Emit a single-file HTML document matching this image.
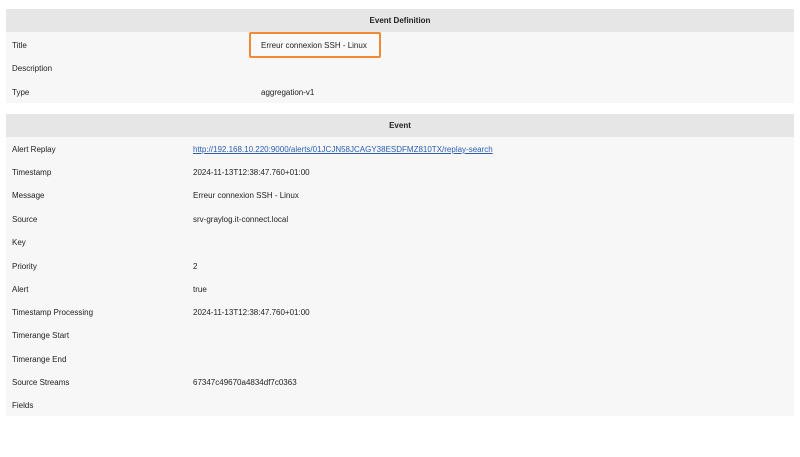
<!DOCTYPE html>
<html><head><style>
body{margin:0;width:800px;height:457px;background:#fff;font-family:"Liberation Sans",sans-serif;font-size:8px;color:#222;position:relative;overflow:hidden}
.box{position:absolute;left:6px;width:788px;background:#f7f7f7}
.hd{position:absolute;left:6px;width:788px;height:23px;background:#e6e6e6;text-align:center;font-weight:bold;line-height:23px;font-size:8px}
.t{position:absolute;white-space:nowrap;line-height:10px}
a{color:#2a5db0;text-decoration:underline}
</style></head><body>
<div class="box" style="top:9px;height:94px"></div>
<div class="hd" style="top:9px">Event Definition</div>
<div class="t" style="left:12px;top:41px">Title</div>
<div class="t" style="left:12px;top:64px">Description</div>
<div class="t" style="left:12px;top:88px">Type</div>
<div style="position:absolute;left:249px;top:32px;width:128px;height:22px;border:2.5px solid #f08a35;background:#f9f9f9;border-radius:2px"></div>
<div class="t" style="left:261px;top:41px">Erreur connexion SSH - Linux</div>
<div class="t" style="left:261px;top:88px">aggregation-v1</div>

<div class="box" style="top:114px;height:302px"></div>
<div class="hd" style="top:114px">Event</div>
<div class="t" style="left:12px;top:145px">Alert Replay</div>
<div class="t" style="left:193px;top:145px"><a>http://192.168.10.220:9000/alerts/01JCJN58JCAGY38ESDFMZ810TX/replay-search</a></div>
<div class="t" style="left:12px;top:168px">Timestamp</div><div class="t" style="left:193px;top:168px">2024-11-13T12:38:47.760+01:00</div>
<div class="t" style="left:12px;top:191px">Message</div><div class="t" style="left:193px;top:191px">Erreur connexion SSH - Linux</div>
<div class="t" style="left:12px;top:215px">Source</div><div class="t" style="left:193px;top:215px">srv-graylog.it-connect.local</div>
<div class="t" style="left:12px;top:238px">Key</div>
<div class="t" style="left:12px;top:262px">Priority</div><div class="t" style="left:193px;top:262px">2</div>
<div class="t" style="left:12px;top:285px">Alert</div><div class="t" style="left:193px;top:285px">true</div>
<div class="t" style="left:12px;top:308px">Timestamp Processing</div><div class="t" style="left:193px;top:308px">2024-11-13T12:38:47.760+01:00</div>
<div class="t" style="left:12px;top:331px">Timerange Start</div>
<div class="t" style="left:12px;top:355px">Timerange End</div>
<div class="t" style="left:12px;top:378px">Source Streams</div><div class="t" style="left:193px;top:378px">67347c49670a4834df7c0363</div>
<div class="t" style="left:12px;top:401px">Fields</div>
</body></html>
